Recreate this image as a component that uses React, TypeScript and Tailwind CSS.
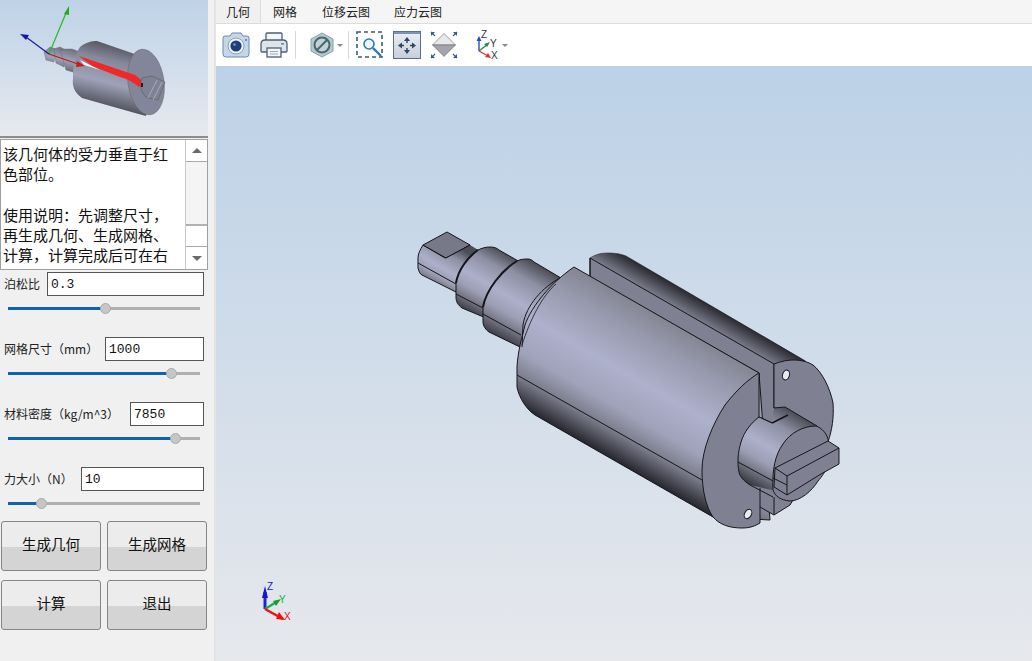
const cjk = { fontFamily: '"Noto Sans CJK SC", "Noto Sans", sans-serif' }

function ParamRow({ label, value, inputWidth, percent }: { label: string, value: string, inputWidth: string, percent: number }) {
    return (
        <div className="h-[65px] shrink-0">
            <div className="flex items-center justify-between h-[24px] pl-[4px] pr-[10px]">
                <span className="text-[12px] text-[#222] whitespace-nowrap leading-none">{label}</span>
                <div className={`${inputWidth} h-[24px] bg-white border border-[#555] pl-[3px] text-[13px] leading-[24px] text-[#111] font-['Liberation_Mono',monospace]`}>{value}</div>
            </div>
            <div className="relative mt-[11px] ml-[8px] mr-[14px] h-[3px] bg-[#b0b0b0]">
                <div className="h-[3px] bg-[#0f62b0]" style={{ width: `${percent}%` }} />
                <div className="absolute top-[-4px] ml-[-5px] w-[11px] h-[11px] rounded-full bg-[#c6c6c6] border border-[#ababab]" style={{ left: `${percent}%` }} />
            </div>
        </div>
    )
}

function GradButton({ label }: { label: string }) {
    return (
        <button className="w-[100px] h-[50px] pb-[4px] rounded-[3px] border border-[#858585] bg-[linear-gradient(#ececec_0%,#ececec_52%,#d4d4d4_52%,#d4d4d4_100%)] text-[14.5px] text-[#111]">
            {label}
        </button>
    )
}

function Thumbnail() {
    return (
        <svg width="208" height="136" viewBox="0 0 208 136">
            <defs>
                <linearGradient id="tb" x1="105" y1="42" x2="90" y2="105" gradientUnits="userSpaceOnUse">
                    <stop offset="0" stopColor="#55555f" />
                    <stop offset="0.25" stopColor="#85879a" />
                    <stop offset="0.6" stopColor="#9fa1b8" />
                    <stop offset="1" stopColor="#4c4c56" />
                </linearGradient>
                <linearGradient id="ts" x1="64" y1="46" x2="58" y2="72" gradientUnits="userSpaceOnUse">
                    <stop offset="0" stopColor="#6a6b78" />
                    <stop offset="0.5" stopColor="#a0a2b8" />
                    <stop offset="1" stopColor="#5a5a66" />
                </linearGradient>
            </defs>
            <path d="M44,52 L50,47 L56,49 L54,62 L46,60 Z" fill="url(#ts)" stroke="#666" strokeWidth="0.4" />
            <path d="M54,49 L60,47 L66,50 L64,67 L56,63 Z" fill="url(#ts)" stroke="#666" strokeWidth="0.4" />
            <path d="M60,50 L66,49 L72,49 L80,52 L76,73 L66,70 Z" fill="url(#ts)" stroke="#666" strokeWidth="0.4" />
            <path d="M80,47 C86,42 92,41 97,41 L155,61 L146,116 L135,113 L82,98 C74,92 72,86 73,78 C73,66 75,54 80,47 Z" fill="url(#tb)" />
            <ellipse cx="146" cy="82" rx="18" ry="33" transform="rotate(-8 146 82)" fill="#83859a" stroke="#666" strokeWidth="0.5" />
            <path d="M79,56 L135,75 C140,78 143,82 143,85 L139,87 C134,83 128,79 120,77 L92,66 Z" fill="#f02828" />
            <path d="M80,60 L100,70 L84,65 Z" fill="#eef0f6" />
            <path d="M142,78 L152,76 L165,82 L158,100 L148,98 C141,95 139,84 142,78 Z" fill="#7f8195" stroke="#555" strokeWidth="0.5" />
            <path d="M157,80 L148,98 M162,82 L153,100" stroke="#bbb" strokeWidth="0.7" />
            <rect x="141" y="83" width="2" height="4" fill="#222" />
            <path d="M49,54 L66,13" stroke="#22bb22" strokeWidth="1.2" />
            <path d="M69,6 L64,14 L69,15 Z" fill="#22aa22" />
            <path d="M49,54 L26,37" stroke="#1818b0" strokeWidth="1.2" />
            <path d="M20,34 L29,35 L26,40 Z" fill="#1818a8" />
            <path d="M49,54 L78,64" stroke="#c01818" strokeWidth="1.2" />
            <path d="M85,66 L77,61 L76,67 Z" fill="#d01818" />
        </svg>
    )
}

function Model() {
    const line = "#16161c"
    const shaftStops = (
        <>
            <stop offset="0" stopColor="#4c4c57" />
            <stop offset="0.22" stopColor="#8d8fa3" />
            <stop offset="0.5" stopColor="#adb0ca" />
            <stop offset="0.68" stopColor="#9c9eb5" />
            <stop offset="0.8" stopColor="#7c7d8c" />
            <stop offset="1" stopColor="#34343c" />
        </>
    )
    return (
        <g stroke={line} strokeWidth="1" strokeLinejoin="round">
            <defs>
                <linearGradient id="body" x1="640" y1="305" x2="566.6" y2="433" gradientUnits="userSpaceOnUse">
                    <stop offset="0" stopColor="#858693" />
                    <stop offset="0.2" stopColor="#999bb0" />
                    <stop offset="0.45" stopColor="#aeb1cc" />
                    <stop offset="0.68" stopColor="#a0a2ba" />
                    <stop offset="0.83" stopColor="#7b7c8b" />
                    <stop offset="1" stopColor="#26262e" />
                </linearGradient>
                <linearGradient id="block" x1="625" y1="256" x2="615.3" y2="272.7" gradientUnits="userSpaceOnUse">
                    <stop offset="0" stopColor="#2a2a32" />
                    <stop offset="1" stopColor="#7c7d8c" />
                </linearGradient>
                <linearGradient id="s1" x1="446" y1="240" x2="420" y2="285" gradientUnits="userSpaceOnUse">{shaftStops}</linearGradient>
                <linearGradient id="s2" x1="497" y1="248" x2="462" y2="310" gradientUnits="userSpaceOnUse">{shaftStops}</linearGradient>
                <linearGradient id="s3" x1="532" y1="261" x2="490" y2="335" gradientUnits="userSpaceOnUse">{shaftStops}</linearGradient>
                <linearGradient id="hub" x1="785" y1="407" x2="742" y2="481" gradientUnits="userSpaceOnUse">{shaftStops}</linearGradient>
            </defs>

            {/* neck */}
            <path d="M532,262 L560,278 L574,267 L530,340 L521,347 Z" fill="#83859a" stroke="none" />

            {/* square end */}
            <path d="M423,245 C420,250 418,254 418,258 L418,268 C419,272 420,274 422,275 L456,292 L470,245 L445,258 Z" fill="url(#s1)" />
            <path d="M418,263 L456,284" fill="none" />
            <path d="M423,245 L447,232 L470,245 L446,258 Z" fill="#777988" />
            <path d="M470,245 L480,251 L458,272 L456,284 L446,258 Z" fill="url(#s1)" stroke="none" />
            <path d="M446,258 L470,245" fill="none" />

            {/* shaft steps */}
            <path d="M478,250 C482,248 486,247 490,247 C494,247 497,248 499,250 L520,262 L486,318 L462,308 C458,305 456,302 456,297 L456,283 C458,270 468,257 478,250 Z" fill="url(#s2)" />
            <path d="M456,294 L483,308" fill="none" />
            <path d="M478,250 C468,257 458,270 456,283" fill="none" strokeWidth="2" />

            <path d="M517,261 C521,259 525,259 528,259 C530,259 532,260 534,262 L561,278 L522,348 L489,332 C486,330 483,326 483,322 L483,307 C486,290 502,270 517,261 Z" fill="url(#s3)" />
            <path d="M483,314 L521,335" fill="none" />
            <path d="M517,261 C502,270 486,290 483,307" fill="none" strokeWidth="2" />

            {/* slot block behind body */}
            <path d="M590,258 C596,254 602,253 608,253 C616,253 621,254 626,256 L806,361 L774,380 L590,277 Z" fill="url(#block)" stroke="none" />
            <path d="M590,258 C596,254 602,253 608,253 C616,253 621,254 626,256 L805,361" fill="none" strokeWidth="0.6" stroke="#2a2a32" />
            <path d="M590,258 L774,364 L774,408 L788,415 L772,423 L759,417 L759,373 L590,277 Z" fill="#7f8192" />
            <path d="M590,258 L590,277" fill="none" />

            {/* main body */}
            <path d="M574,267 L759,373 L770,520 L713,517 L535,415 C527,410 519,398 517,387 L517,367 C518,350 522,338 525,325 C532,305 552,282 574,267 Z" fill="url(#body)" />
            <path d="M560,278 C543,287 526,305 523,325 L522,347" fill="none" />
            <path d="M556,284 C542,296 530,320 522,345" fill="none" strokeWidth="0.8" />
            <path d="M517,375 L702,480" fill="none" />

            {/* end face */}
            <path d="M759,373 L759,417 L772,423 L788,415 L774,408 L774,364 C782,361 788,360 793,360 C802,360 808,362 813,365 C822,372 830,388 833,403 C834,418 832,430 828,442 L790,505 L774,515 L760,507 L760,523 C755,526 750,528 742,528 C730,528 720,525 713,517 C706,507 702,490 702,470 C702,450 712,425 725,405 C735,392 747,380 759,373 Z" fill="#7f8192" />
            <path d="M760,488 L760,507" fill="none" />
            <path d="M774,497 L774,515" fill="none" />
            <ellipse cx="786" cy="375" rx="3.4" ry="5" transform="rotate(18 786 375)" fill="#e8eaf0" />
            <ellipse cx="748" cy="514" rx="3.4" ry="5" transform="rotate(28 748 514)" fill="#e8eaf0" />

            {/* hub */}
            <path d="M759,417 L772,423 L774,408 L785,407 L817,426 L772,490 L750,485 C744,481 740,477 739,472 C737,462 738,452 741,442 C744,432 751,423 759,417 Z" fill="url(#hub)" stroke="none" />
            <path d="M774,408 L785,407 L817,426 M739,472 C737,462 738,452 741,442 C744,432 751,423 759,417 L772,423 M739,472 C740,477 744,481 750,485 L773,497" fill="none" />
            <path d="M772,423 L788,415" fill="none" strokeWidth="1.6" />
            <path d="M738,462 L773,481" fill="none" />
            <path d="M773,490 C772,470 775,455 783,444 C790,433 803,426 816,426 C822,428 826,433 828,439 C833,460 826,472 818,481 C812,491 800,501 790,501 C780,500 775,496 773,490 Z" fill="#7f8192" />

            {/* tab */}
            <path d="M775,468 L828,441 L839,448 L839,464 L821,474 L787,495 L774,487 Z" fill="#7f8192" />
            <path d="M775,468 L787,476 L839,448" fill="none" />
            <path d="M787,476 L787,495" fill="none" />
            <path d="M773,478 L787,485" fill="none" />
        </g>
    )
}

function Triad() {
    return (
        <g>
            <path d="M265,609 L265,592" stroke="#2020e0" strokeWidth="3" />
            <path d="M265,586 L262,598 L268,598 Z" fill="#1414d8" />
            <path d="M265,609 L278,601" stroke="#18b040" strokeWidth="2.5" />
            <path d="M281,599 L273,601 L276,606 Z" fill="#10a030" />
            <path d="M265,609 L283,619" stroke="#f01010" strokeWidth="2.5" />
            <path d="M279,612 L276,619 L285,620 Z" fill="#f01010" />
            <text x="267" y="590" fontSize="10" fill="#1414d8" fontFamily="Liberation Sans, sans-serif">Z</text>
            <text x="279" y="603" fontSize="10" fill="#18b040" fontFamily="Liberation Sans, sans-serif">Y</text>
            <text x="284" y="620" fontSize="10" fill="#e01010" fontFamily="Liberation Sans, sans-serif">X</text>
        </g>
    )
}

function CameraIcon() {
    return (
        <svg width="28" height="26" viewBox="0 0 28 26" className="shrink-0">
            <path d="M1,6 Q1,4 3,4 L8,4 L10,1 L19,1 L21,4 L25,4 Q27,4 27,6 L27,22 Q27,25 24,25 L4,25 Q1,25 1,22 Z" fill="#c4d6ea" stroke="#6f89a6" strokeWidth="1" />
            <circle cx="14" cy="14" r="8" fill="#eef3f8" stroke="#8aa0b8" />
            <circle cx="14" cy="14" r="5.6" fill="#1e3f7a" />
            <circle cx="12.5" cy="12.5" r="1.3" fill="#7f9fd0" />
            <circle cx="24" cy="8" r="1" fill="#5a7797" />
        </svg>
    )
}

function PrinterIcon() {
    return (
        <svg width="28" height="26" viewBox="0 0 28 26" className="shrink-0">
            <path d="M6,9 L6,2 Q6,1 7,1 L21,1 Q22,1 22,2 L22,9 Z" fill="#f4f6f8" stroke="#4d5f74" strokeWidth="1.3" />
            <path d="M1,12 Q1,8 5,8 L23,8 Q27,8 27,12 L27,19 Q27,20 26,20 L2,20 Q1,20 1,19 Z" fill="#dfe4ea" stroke="#4d5f74" strokeWidth="1.3" />
            <rect x="21" y="11" width="3" height="1.6" fill="#6d8ba8" />
            <rect x="7" y="16" width="14" height="9" fill="#f4f6f8" stroke="#4d5f74" strokeWidth="1.3" />
            <path d="M10,19.5 H18 M10,22 H18" stroke="#9aa7b5" />
        </svg>
    )
}

function HexIcon() {
    return (
        <svg width="24" height="26" viewBox="0 0 24 26" className="shrink-0">
            <path d="M12,1 L23,7 L23,19 L12,25 L1,19 L1,7 Z" fill="#b4c9cd" stroke="#8aa3a8" />
            <circle cx="12" cy="13" r="7.5" fill="#c5d0d4" stroke="#44686f" strokeWidth="2" />
            <path d="M7,18 L17,8" stroke="#44686f" strokeWidth="2" />
        </svg>
    )
}

function Caret() {
    return <div className="w-0 h-0 border-l-[3px] border-r-[3px] border-t-[3px] border-l-transparent border-r-transparent border-t-[#8a8a8a]" />
}

function ZoomBoxIcon() {
    return (
        <svg width="28" height="28" viewBox="0 0 28 28" className="shrink-0">
            <rect x="1" y="1" width="25" height="25" fill="none" stroke="#3c5a78" strokeWidth="1.6" strokeDasharray="4 3" />
            <circle cx="13" cy="13" r="5" fill="#eef4fa" stroke="#2a7ab8" strokeWidth="1.6" />
            <path d="M17,17 L25,25" stroke="#2a7ab8" strokeWidth="2.4" />
        </svg>
    )
}

function FitIcon() {
    return (
        <svg width="28" height="28" viewBox="0 0 28 28" className="shrink-0">
            <defs>
                <linearGradient id="fitbg" x1="0" y1="0" x2="0" y2="1">
                    <stop offset="0" stopColor="#eceff5" />
                    <stop offset="1" stopColor="#c7cddb" />
                </linearGradient>
            </defs>
            <rect x="0.5" y="0.5" width="27" height="27" fill="url(#fitbg)" stroke="#59708c" />
            <rect x="1" y="1" width="26" height="2" fill="#7c94b2" />
            <path d="M14,9 L14,12 M14,17 L14,20 M8,14.5 L11,14.5 M17,14.5 L20,14.5" stroke="#2f4560" strokeWidth="1.4" />
            <path d="M14,6 L11,10 L17,10 Z M14,23 L11,19 L17,19 Z M5,14.5 L9,11.5 L9,17.5 Z M23,14.5 L19,11.5 L19,17.5 Z" fill="#2f4560" />
        </svg>
    )
}

function DiamondIcon() {
    return (
        <svg width="28" height="28" viewBox="0 0 28 28" className="shrink-0">
            <path d="M14,2.5 L25.5,14 L2.5,14 Z" fill="#e9e9ec" stroke="#666" strokeWidth="0.6" />
            <path d="M2.5,14 L25.5,14 L14,25.5 Z" fill="#a4a4aa" stroke="#666" strokeWidth="0.6" />
            <path d="M1,1 L5,5 M27,1 L23,5 M1,27 L5,23 M27,27 L23,23" stroke="#3a5a80" strokeWidth="1.1" />
            <path d="M1,1 L5,1 L1,5 Z M27,1 L23,1 L27,5 Z M1,27 L5,27 L1,23 Z M27,27 L23,27 L27,23 Z" fill="#3a5a80" />
        </svg>
    )
}

function AxesIcon() {
    return (
        <svg width="26" height="30" viewBox="0 0 26 30" className="shrink-0">
            <path d="M3,21 L3,9" stroke="#2050c0" strokeWidth="1.4" />
            <path d="M3,6 L0.5,11 L5.5,11 Z" fill="#2050c0" />
            <path d="M3,21 L12,14" stroke="#1f8f4a" strokeWidth="1.4" />
            <path d="M14,12 L8,14 L11,17 Z" fill="#1f8f4a" />
            <path d="M3,21 L12,26" stroke="#e03030" strokeWidth="1.4" />
            <path d="M15,28 L9,27 L12,23 Z" fill="#e03030" />
            <text x="5" y="8" fontSize="10" fill="#333" fontFamily="Liberation Sans, sans-serif">Z</text>
            <text x="14" y="17" fontSize="10" fill="#333" fontFamily="Liberation Sans, sans-serif">Y</text>
            <text x="15" y="29" fontSize="10" fill="#333" fontFamily="Liberation Sans, sans-serif">X</text>
        </svg>
    )
}

export default function App() {
    const tabs = [
        { name: "网格", w: "w-[49px]" },
        { name: "位移云图", w: "w-[72px]" },
        { name: "应力云图", w: "w-[72px]" },
    ]

    return (
        <div className="flex w-[1032px] h-[661px] overflow-hidden bg-[#f0f0f0]" style={cjk}>
            <div className="w-[214px] shrink-0 flex flex-col">
                <div className="w-[208px] h-[136px] shrink-0 bg-[linear-gradient(#bed2e7,#e6e9ef)]">
                    <Thumbnail />
                </div>
                <div className="w-[208px] h-[2px] shrink-0 bg-[#8c8c8c]" />
                <div className="flex w-[208px] h-[131px] shrink-0 mt-[1px] border border-[#a0a0a0] bg-white">
                    <div className="flex-1 overflow-hidden pl-[2px] pt-[4px] text-[15px] leading-[20.3px] text-[#111] whitespace-pre">
                        {"该几何体的受力垂直于红\n色部位。\n\n使用说明：先调整尺寸，\n再生成几何、生成网格、\n计算，计算完成后可在右"}
                    </div>
                    <div className="w-[22px] flex flex-col border-l border-[#c8c8c8] bg-[#f4f4f4]">
                        <div className="h-[22px] border-b border-[#a8a8a8] bg-white flex items-center justify-center">
                            <div className="w-0 h-0 border-l-[5px] border-r-[5px] border-b-[5px] border-l-transparent border-r-transparent border-b-[#6a6a6a]" />
                        </div>
                        <div className="h-[64px] border-b-2 border-[#b0b0b0]" />
                        <div className="h-[21px] border-b border-[#a8a8a8] bg-white" />
                        <div className="flex-1 bg-white flex items-center justify-center">
                            <div className="w-0 h-0 border-l-[5px] border-r-[5px] border-t-[5px] border-l-transparent border-r-transparent border-t-[#6a6a6a]" />
                        </div>
                    </div>
                </div>
                <div className="mt-[2px]">
                    <ParamRow label="泊松比" value="0.3" inputWidth="w-[157px]" percent={50.5} />
                    <ParamRow label="网格尺寸（mm）" value="1000" inputWidth="w-[99px]" percent={85} />
                    <ParamRow label="材料密度（kg/m^3）" value="7850" inputWidth="w-[74px]" percent={87} />
                    <ParamRow label="力大小（N）" value="10" inputWidth="w-[123px]" percent={17} />
                </div>
                <div className="grid grid-cols-[100px_100px] gap-x-[6px] gap-y-[9px] pl-[1px] mt-[-11px]">
                    <GradButton label="生成几何" />
                    <GradButton label="生成网格" />
                    <GradButton label="计算" />
                    <GradButton label="退出" />
                </div>
            </div>
            <div className="w-[2px] shrink-0 bg-[#e2e2e2]" />

            <div className="flex-1 flex flex-col min-w-0">
                <div className="flex h-[24px] shrink-0 bg-[#f5f5f5] border-b border-[#dcdcdc] text-[12px] text-[#222] leading-[23px]">
                    <div className="w-[45px] pl-[10px] bg-[#f0f0f0] border-r border-[#dcdcdc]">几何</div>
                    <div className="flex pl-[12px]">
                        {tabs.map((t) => (
                            <div key={t.name} className={t.w}>{t.name}</div>
                        ))}
                    </div>
                </div>
                <div className="flex items-center h-[42px] shrink-0 bg-white pl-[6px]">
                    <CameraIcon />
                    <div className="ml-[10px]"><PrinterIcon /></div>
                    <div className="w-px h-[28px] bg-[#d8d8d8] ml-[7px]" />
                    <div className="ml-[14px]"><HexIcon /></div>
                    <div className="ml-[3px]"><Caret /></div>
                    <div className="w-px h-[28px] bg-[#d8d8d8] ml-[5px]" />
                    <div className="ml-[7px]"><ZoomBoxIcon /></div>
                    <div className="ml-[9px]"><FitIcon /></div>
                    <div className="ml-[9px]"><DiamondIcon /></div>
                    <div className="ml-[18px]"><AxesIcon /></div>
                    <div><Caret /></div>
                </div>
                <div className="relative flex-1 bg-[linear-gradient(#bcd1e7,#e6e8ec)]">
                    <svg className="absolute inset-0" width="816" height="595" viewBox="216 66 816 595">
                        <Model />
                        <Triad />
                    </svg>
                </div>
            </div>
        </div>
    )
}
